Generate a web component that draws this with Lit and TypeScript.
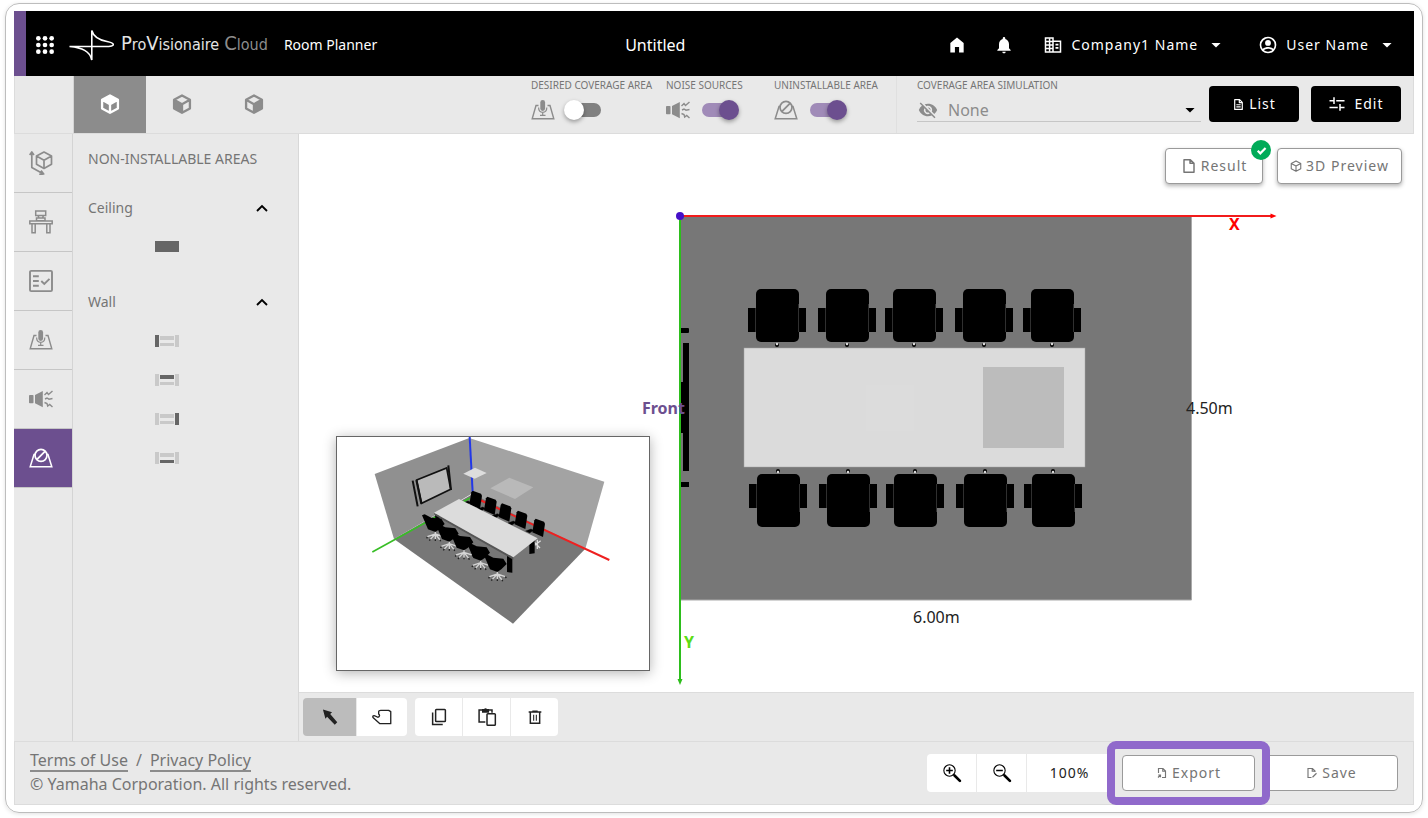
import { LitElement, html, svg, css } from "lit";
import { customElement, state } from "lit/decorators.js";
import { classMap } from "lit/directives/class-map.js";

const icon = (body: unknown, size = 24, box = "0 0 24 24") =>
  html`<svg class="icon" width=${size} height=${size} viewBox=${box} fill="currentColor" aria-hidden="true">${body}</svg>`;

/* Glyphs on a 24 unit grid */
const caret = svg`<path d="M6.500 9.500h11L12 15z"/>`;
const home = svg`<path d="M4 21V9.500L12 3l8 6.500V21h-5.500v-6.500h-5V21z"/>`;
const bell = svg`<path d="M12 22c1.100 0 2-.9 2-2h-4c0 1.100.9 2 2 2zm6-6v-5c0-3.070-1.640-5.640-4.500-6.320V4a1.500 1.500 0 0 0-3 0v.68C7.630 5.360 6 7.920 6 11v5l-2 2v1h16v-1z"/>`;
const company = svg`<path fill="none" stroke="currentColor" stroke-width="1.8" d="M3 3.500h9v17H3zM12 7.500h9v13h-9M3 7.700h9M3 12h9M3 16.200h9"/><path d="M7 4h1.800v16H7zM15 10.500h3.500v2H15zm0 4h3.500v2H15z"/>`;
const account = svg`<path fill-rule="evenodd" d="M12 2a10 10 0 1 0 0 20 10 10 0 0 0 0-20zM7.070 18.280C7.500 17.380 10.120 16.500 12 16.500s4.510.88 4.930 1.780A7.900 7.900 0 0 1 12 20a7.900 7.900 0 0 1-4.930-1.720zm11.290-1.450C16.930 15.090 13.460 14.500 12 14.500s-4.930.59-6.360 2.330A8 8 0 1 1 20 12a7.900 7.900 0 0 1-1.640 4.830zM12 6a3.500 3.500 0 1 0 0 7 3.500 3.500 0 0 0 0-7z"/>`;
const cubeFrame = svg`<path fill="none" stroke="currentColor" stroke-width="2.200" stroke-linejoin="round" d="M12 1.800 21.500 7v10.300L12 22.500 2.500 17.300V7zM2.500 7 12 12.200 21.500 7M12 12.200v10.300"/>`;
const cubeShell = svg`<path fill="none" stroke="currentColor" stroke-width="2.800" stroke-linejoin="round" d="M12 1.800 21.500 7v10.300L12 22.500 2.500 17.300V7zM2.500 7 12 12.200 21.500 7M12 12.200v10.300"/>`;
const cubeTop = svg`${cubeShell}<path d="M12 2 21 7l-9 5.200L3 7z"/>`;
const cubeLeft = svg`${cubeShell}<path d="M2.500 7 12 12.200v10L2.500 17z"/>`;
const cubeRight = svg`${cubeShell}<path d="M21.500 7 12 12.200v10l9.500-5.200z"/>`;
const cubeAxes = svg`<g fill="none" stroke="currentColor" stroke-width="1.700" stroke-linejoin="round"><path d="M15 1 22.500 5v8.300L15 17.500l-7.500-4.200V5zM7.500 5 15 9.200 22.500 5M15 9.200v8.300"/><path d="M2.800 2v14.500l11.200 6.300M.6 4l2.200-3L5 4M12 19.600l2.700 3.400-4.500.4"/></g>`;
const desk = svg`<g fill="none" stroke="currentColor" stroke-width="1.500"><path d="M6.700 1h10v4.500h-10zM9 5.500 10 8M14.500 5.500 13.500 8M7.500 8h8.500v2.700H7.500zM.8 11h22.400v2.800H.8zM3 13.800h3.200v9H3zM17.800 13.800H21v9h-3.200z"/></g>`;
const checklist = svg`<g fill="none" stroke="currentColor" stroke-width="1.900"><rect x="1" y="1.900" width="22" height="20.200" rx="1.200"/><path d="M4 7.300h5.800M4 12h5.800M4 16.700h5.800M12.300 12l3 3 5.200-5.200"/></g>`;
const mic = svg`<path fill="none" stroke="currentColor" stroke-width="1.400" d="M7.500 7.500H5L1.200 20.800h21.600L19 7.500h-2.500"/><rect x="9.300" y="2" width="4.800" height="11" rx="2.400"/><path fill="none" stroke="currentColor" stroke-width="1.200" d="M7.600 9.500c0 3 1.700 4.800 4.100 4.800s4.100-1.800 4.100-4.800M11.700 14.300v3M9 17.300h5.500"/>`;
const noise = svg`<rect x="0" y="8" width="4.500" height="8.300" rx=".8"/><path d="M6 8l7.800-4v16.300l-7.800-4z"/><path fill="none" stroke="currentColor" stroke-width="1.400" d="m15.500 8 2.500-2.500 1.500 2L23.500 4M16 12l2-1 2 1.200 3.500-.7M15.500 15.500l2.500 1 .7 2.500 2-1.500L23.500 20"/>`;
const blocked = svg`<path fill="none" stroke="currentColor" stroke-width="1.500" d="M6.500 8.500H5L1.200 20.800h21.600L19 8.500h-1.500"/><circle cx="12" cy="9.300" r="6" fill="none" stroke="currentColor" stroke-width="1.700"/><path fill="none" stroke="currentColor" stroke-width="1.700" d="m8 13.300 8-8"/>`;
const hidden = svg`<path d="M12 7a5 5 0 0 1 5 5c0 .65-.13 1.260-.36 1.830l2.920 2.920A11.800 11.800 0 0 0 23 12C21.270 7.610 17 4.500 12 4.500c-1.400 0-2.740.25-3.980.7l2.160 2.160C10.740 7.130 11.350 7 12 7zM2 4.270l2.740 2.740A11.800 11.800 0 0 0 1 12c1.730 4.390 6 7.500 11 7.500 1.550 0 3.030-.3 4.380-.84L19.730 22 21 20.730 3.270 3zM7.530 9.800l1.550 1.550A2.800 2.800 0 0 0 12 15c.22 0 .44-.03.65-.08l1.550 1.550A5 5 0 0 1 7.530 9.800zm4.310-.78 3.150 3.150.02-.16a3 3 0 0 0-3-3z"/>`;
const sheet = svg`<path fill="none" stroke="currentColor" stroke-width="2.200" stroke-linejoin="round" d="M14 3H5v18h14V8zM13.500 3v5.500H19M8 12.500h8M8 16.500h8"/>`;
const tune = svg`<path fill="none" stroke="currentColor" stroke-width="2" d="M2 7.500h7M11 7.500h11M8 3v9M2 16.500h11M16 12v9M16 16.500h6"/>`;
const file = svg`<path fill="none" stroke="currentColor" stroke-width="2.200" stroke-linejoin="round" d="M14 2.500H4.500v19h15V8zM13.500 2.500V8h6"/>`;
const fileOut = svg`<path fill="none" stroke="currentColor" stroke-width="2.300" d="M5 12V3h9l5 5v13h-7M13.500 3v5.500H19M4 21l5-5M4.500 16H9v4.500"/>`;
const fileIn = svg`<path fill="none" stroke="currentColor" stroke-width="2.300" d="M11 21H4V3h9l5 5v2M12.500 3v5.500H18M13 20.500l8-8"/>`;
const tick = svg`<path fill="none" stroke="currentColor" stroke-width="4" d="m5 12.500 4.800 4.800L19.500 7.500"/>`;
const chevron = svg`<path fill="none" stroke="currentColor" stroke-width="2.800" d="m4.500 16.500 7.500-7.500 7.500 7.500"/>`;
const pointer = svg`<path d="M3.500 3 14.500 6.200l-2.300 2.200 8.500 10-3 2.800-9.200-9.400-2 2.300z"/>`;
const hand = svg`<path fill="none" stroke="currentColor" stroke-width="1.600" stroke-linejoin="round" d="M8 8.500V5.500C8 4.500 9 4 10.500 4H20l2.500 1.500V20H9.500L1.200 12.500c-.8-1.800 1-2.500 2.300-1.800L7 12.300C9.500 12 9.500 9.300 8 8.500z"/>`;
const copy = svg`<g fill="none" stroke="currentColor" stroke-width="2"><rect x="7.500" y="2" width="13" height="16" rx="1"/><path d="M3.500 6v16H17"/></g>`;
const paste = svg`<g fill="none" stroke="currentColor" stroke-width="1.800"><path d="M10 18H2.500V3.500H18V7"/><rect x="12" y="8" width="10" height="14" rx="1"/></g><path d="M6 2.500h2.500a2 2 0 0 1 3.500 0h2.500V7H6z"/>`;
const trash = svg`<g fill="none" stroke="currentColor" stroke-width="2.200"><path d="M2.500 4.500h19M8 3.500h8M5 5v16.500h14V5"/><path stroke-width="1.600" d="M10 8.500v9M14 8.500v9"/></g>`;
const zoomIn = svg`<circle cx="9" cy="9" r="6.800" fill="none" stroke="currentColor" stroke-width="1.300"/><path fill="none" stroke="currentColor" stroke-width="1.900" d="M9 5v8M5 9h8"/><path fill="none" stroke="currentColor" stroke-width="3.200" stroke-linecap="round" d="m15 15 6.500 6.500"/>`;
const zoomOut = svg`<circle cx="9" cy="9" r="6.800" fill="none" stroke="currentColor" stroke-width="1.300"/><path fill="none" stroke="currentColor" stroke-width="1.900" d="M5 9h8"/><path fill="none" stroke="currentColor" stroke-width="3.200" stroke-linecap="round" d="m15 15 6.500 6.500"/>`;

@customElement("app-header")
class AppHeader extends LitElement {
  static styles = css`
    :host { display: block; font-family: "Noto Sans", sans-serif; }
    .bar { display: flex; align-items: center; box-sizing: border-box; height: 65px; padding: 2px 1px 0 0; background: #000; color: #fff; border-left: 12px solid #6c4f8f; }
    button { display: flex; align-items: center; gap: 8px; border: 0; padding: 0; background: none; color: inherit; font: inherit; font-size: 14px; line-height: 20px; cursor: pointer; }
    .apps { margin-left: 9px; }
    .brand { display: flex; align-items: center; gap: 7px; margin-left: 14px; color: #fff; text-decoration: none; }
    .word { display: flex; align-items: baseline; font-family: "Liberation Sans Narrow", "DejaVu Sans Condensed", sans-serif; font-size: 16px; line-height: 30px; color: #e4e4e4; }
    .big { font-size: 20px; line-height: 24px; }
    .cloud { margin-left: 5px; color: #8d8d8d; }
    .product { margin-left: 16px; font-size: 14px; line-height: 20px; white-space: nowrap; }
    h1 { flex: 1; margin: 0; text-align: center; font-weight: 400; font-size: 16px; line-height: 24px; }
    .round { width: 47px; height: 48px; justify-content: center; }
    .menu { height: 48px; padding: 0 16px; letter-spacing: 1px; white-space: nowrap; }
    .icon { display: block; flex: none; }
  `;

  render() {
    return html`<header class="bar">
      <button class="apps" aria-label="Apps">
        ${icon([4, 12, 20].map((y) => [4, 12, 20].map((x) => svg`<circle cx=${x} cy=${y} r="2.800"/>`)), 20)}
      </button>
      <a class="brand" href="#">
        <svg width="45" height="32" viewBox="0 0 45 32" fill="none" stroke="#fff" stroke-width="1.600" aria-hidden="true">
          <path d="M.5 17.500H36c6 0 8.500-.8 8.300-2-.3-1.500-2.600-2.300-6.300-3C30 11 24.500 8 22.800 1.500V31C21 22 13 18.800.5 17.500z"/>
        </svg>
        <span class="word"><span class="big">P</span>ro<span class="big">V</span>isionaire<span class="cloud"><span class="big">C</span>loud</span></span>
      </a>
      <span class="product">Room Planner</span>
      <h1>Untitled</h1>
      <button class="round" aria-label="Home">${icon(home, 20)}</button>
      <button class="round" aria-label="Notifications">${icon(bell, 20)}</button>
      <button class="menu">${icon(company, 20)}<span>Company1 Name</span>${icon(caret, 20)}</button>
      <button class="menu">${icon(account, 20)}<span>User Name</span>${icon(caret, 20)}</button>
    </header>`;
  }
}

@customElement("room-plan")
class RoomPlan extends LitElement {
  static styles = css`
    :host { display: block; }
    svg { display: block; font-family: "Noto Sans", sans-serif; font-size: 16px; }
    .strong { font-weight: 700; }
  `;

  private chair(x: number, y: number, flip: boolean) {
    return svg`<g transform=${`translate(${x} ${y}) scale(1 ${flip ? -1 : 1})`}>
      <rect x="-21" y="-27" width="43" height="53" rx="5"/>
      <rect x="-29" y="-8" width="8" height="24"/><rect x="22" y="-8" width="7" height="24"/>
      <path d="M-21.500-12v28M21.500-12v28" stroke="#777" stroke-width=".4"/>
      <circle cx="0" cy="29" r="2"/><circle cx="0" cy="28" r="1.200" fill="#ddd"/>
    </g>`;
  }

  render() {
    const seats = [777, 847, 914, 984, 1052];
    return html`<svg width="640" height="490" viewBox="640 200 640 490" role="img" aria-label="Room plan, top view">
      <rect x="680" y="216" width="512" height="384" fill="#777"/>
      <path d="M1191.500 216v384H680" fill="none" stroke="#aaa"/>
      ${seats.map((x) => this.chair(x, 316, false))}
      ${seats.map((x) => this.chair(x + 1, 500, true))}
      <rect x="744" y="348" width="341" height="119" fill="#dbdbdb" stroke="#a5a5a5" stroke-width=".5"/>
      <rect x="866" y="385" width="48" height="46" fill="#dcdcdc"/>
      <rect x="983" y="367" width="81" height="81" fill="#bcbcbc"/>
      <path d="M683 343h6v128h-6zM680 382h6v51h-6zM680 328h8a1 1 0 0 1 1 1v3a1 1 0 0 1-1 1h-8zM680 482h9v5h-9z"/>
      <path d="M680 216h592" stroke="#f21b1b" stroke-width="2"/><path d="M1276.500 216l-6-2.500v5z" fill="red"/>
      <path d="M680 216v464" stroke="#2dbe1c" stroke-width="2"/><path d="M680 685l-2.500-6h5z" fill="#2dbe1c"/>
      <circle cx="680" cy="216" r="4" fill="#4510c8"/>
      <text class="strong" x="1229" y="230" fill="red">X</text>
      <text class="strong" x="684" y="648" fill="#5bdc14">Y</text>
      <text class="strong" x="642" y="414" fill="#6c4f8f">Front</text>
      <text x="1186" y="414" fill="#222">4.50m</text>
      <text x="913" y="623" fill="#222">6.00m</text>
    </svg>`;
  }
}

@customElement("room-preview")
class RoomPreview extends LitElement {
  static styles = css`
    :host { display: block; border: 1px solid #666; background: #fff; box-shadow: 0 2px 12px rgba(0, 0, 0, 0.3); }
    svg { display: block; }
  `;

  private backSeat(x: number, y: number) {
    return svg`<g transform=${`translate(${x} ${y})`}><path d="M-12-20-8-25 17-16 20-10 14 30-18 16z"/><path d="M-38 12l16-6 8 4-12 8z" stroke="#000"/></g>`;
  }

  private frontSeat(x: number, y: number) {
    return svg`<g transform=${`translate(${x} ${y})`}>
      <path d="M0 20v26M-24 38 0 30l24 8M-15 46 0 30l14 18" fill="none" stroke="#d5d5d5" stroke-width="4"/>
      <path d="M-24 39l-2 4M24 38l3 4M0 46v5M14 47l2 5M-15 46l-3 4" stroke="#222" stroke-width="4"/>
      <path d="M-40-26l8-3 20 10 30 3 10 16-16 16-12 8-22-8z"/>
    </g>`;
  }

  render() {
    return html`<svg width="312" height="233" viewBox="51 37 936 699" role="img" aria-label="Room preview in 3D">
      <path d="M164 148 448 40l10 166L222 343z" fill="#909090"/>
      <path d="M448 40 853 171l-57 201L458 212z" fill="#a3a3a3"/>
      <path d="M222 343 458 208l338 164-217 225z" fill="#777"/>
      <path d="M449 37l9 166" stroke="#2238e8" stroke-width="6"/>
      <path d="M480 226 868 406" stroke="#ee2020" stroke-width="6"/>
      <path d="M157 382 450 220" stroke="#38be26" stroke-width="5"/>
      <path d="M430 147l35-18 35 16-36 17z" fill="#ddd"/>
      <path d="M511 191l57-32 72 29-55 35z" fill="#b9b9b9"/>
      <path d="M290 166 380 130l12 64-87 42z" fill="#bababa" stroke="#111" stroke-width="5"/>
      <path d="M278 168l15 77M385 122l8 74M289 166l15 72" stroke="#111" stroke-width="6"/>
      <path d="M640 350l20 20M644 362l18-14M652 345v28" stroke="#ddd" stroke-width="4"/>
      ${[[466, 223], [510, 241], [554, 261], [602, 283], [655, 307]].map(([x, y]) => this.backSeat(x, y))}
      <path d="M345 268l14 2v28h-12zM628 350l16-6v42l-16 2zM561 394l16-6v56l-16-2z"/>
      <path d="M342 264 580 397v8L344 272z" fill="#555"/>
      ${[[346, 298], [388, 327], [432, 353], [482, 384], [532, 418]].map(([x, y]) => this.frontSeat(x, y))}
      <path d="M342 264l75-41 236 118-73 57z" fill="#dcdcdc"/>
    </svg>`;
  }
}

@customElement("app-root")
class AppRoot extends LitElement {
  static styles = css`
    :host { display: flex; min-height: 100vh; background: #fff; font-family: "Noto Sans", sans-serif; font-size: 14px; line-height: 20px; color: #757575; }
    * { box-sizing: border-box; }
    button, select, input { font: inherit; color: inherit; margin: 0; }
    button { display: inline-flex; align-items: center; justify-content: center; padding: 0; border: 0; background: none; cursor: pointer; }
    .icon { display: block; flex: none; }
    .frame { flex: 1; display: flex; flex-direction: column; min-width: 0; margin: 3px 5px 5px; padding: 7px 8px; border: 1px solid #bdbdbd; border-radius: 14px; box-shadow: 0 1px 4px rgba(0, 0, 0, 0.12); }

    .tools { display: flex; height: 58px; background: #e9e9e9; border: solid #dcdcdc; border-width: 0 1px 1px; }
    .corner { width: 59px; border-right: 1px solid #d4d4d4; }
    .view { width: 72px; padding-bottom: 1px; color: #8c8c8c; }
    .view.on { background: #8c8c8c; color: #fff; }
    .toggles { display: flex; margin-left: auto; border-right: 1px solid #e0e0e0; }
    .toggle { width: 108px; }
    .toggle.wide { width: 135px; }
    .toggle.last { width: 122px; }
    .caption { display: block; font-size: 10px; line-height: 18px; white-space: nowrap; }
    .row { display: flex; align-items: center; gap: 12px; height: 32px; color: #8c8c8c; }
    .switch { appearance: none; position: relative; width: 34px; height: 14px; border-radius: 7px; background: #808080; cursor: pointer; }
    .switch::before { content: ""; position: absolute; top: -3px; left: -3px; width: 20px; height: 20px; border-radius: 50%; background: #fff; box-shadow: 0 2px 4px rgba(0, 0, 0, 0.35); }
    .switch:checked { background: #a08bb8; }
    .switch:checked::before { left: 17px; background: #6c4f8f; }
    .simulation { width: 284px; margin: 0 8px 0 20px; }
    .picker { position: relative; display: flex; align-items: center; height: 28px; padding-top: 4px; border-bottom: 1px solid #c6c6c6; color: #8c8c8c; }
    .picker select { appearance: none; width: 100%; height: 24px; padding: 0 32px 0 31px; border: 0; background: none; font-size: 16px; line-height: 24px; }
    .picker .lead, .picker .tail { position: absolute; pointer-events: none; }
    .picker .lead { left: 1px; }
    .picker .tail { right: 1px; color: #000; }
    .actions { display: flex; gap: 12px; padding: 10px 12px 0 0; }
    .solid { width: 90px; height: 36px; gap: 4px; border-radius: 4px; background: #000; color: #fff; letter-spacing: 1px; }
    .solid.spaced { gap: 8px; }

    .body { flex: 1; display: flex; min-height: 0; }
    .rail { width: 59px; background: #e9e9e9; border-right: 1px solid #d4d4d4; }
    .rail button { width: 100%; height: 59px; padding-right: 4px; border-bottom: 1px solid #c6c6c6; color: #8c8c8c; }
    .rail button.on { background: #6c4f8f; color: #fff; }
    .panel { width: 226px; padding: 15px 15px 0; background: #e9e9e9; border-right: 1px solid #d8d8d8; }
    h2, h3 { margin: 0; font-weight: 400; font-size: 14px; line-height: 20px; white-space: nowrap; }
    h2 { margin-bottom: 27px; }
    .fold { display: flex; align-items: center; justify-content: space-between; width: 100%; height: 24px; padding-right: 13px; }
    .fold .icon { color: #000; }
    .areas { list-style: none; margin: 7px 0 24px; padding: 0 0 0 67px; }
    .areas li, .areas button { display: flex; height: 39px; }

    .stage { flex: 1; display: flex; flex-direction: column; min-width: 0; }
    .canvas { flex: 1; position: relative; overflow: hidden; min-height: 558px; background: #fff; }
    .plan { position: absolute; left: 341px; top: 66px; }
    .preview { position: absolute; left: 37px; top: 302px; }
    .floating { position: absolute; top: 14px; right: 12px; display: flex; gap: 14px; }
    .lined { position: relative; height: 36px; gap: 4px; border: 1px solid #9a9a9a; border-radius: 4px; background: #fff; letter-spacing: 1px; }
    .floating .lined { box-shadow: 0 2px 4px rgba(0, 0, 0, 0.3); }
    .result { width: 98px; }
    .threed { width: 125px; }
    .done { position: absolute; top: -9px; right: -9px; display: flex; align-items: center; justify-content: center; width: 20px; height: 20px; border-radius: 50%; background: #00ab59; color: #fff; }

    .edit { display: flex; gap: 8px; height: 49px; padding: 5px 4px; background: #e9e9e9; border-top: 1px solid #dcdcdc; }
    .group { display: flex; gap: 1px; height: 38px; border-radius: 4px; overflow: hidden; color: #222; }
    .group button { width: 47px; background: #fff; }
    .group .large { width: 50px; }
    .group .on { width: 53px; background: #bcbcbc; }

    footer { display: flex; align-items: center; justify-content: space-between; height: 64px; padding: 0 15px; background: #e9e9e9; border: 1px solid #dcdcdc; }
    .legal { padding-bottom: 2px; font-size: 16px; line-height: 24px; }
    .legal p { margin: 0; }
    .legal a { display: inline-block; line-height: 20px; color: inherit; text-decoration: none; border-bottom: 2px solid #8c8c8c; }
    .legal .slash { margin: 0 8px; }
    .controls { display: flex; align-items: center; gap: 10px; }
    .zoom { display: flex; gap: 1px; height: 38px; border-radius: 4px; overflow: hidden; color: #222; }
    .zoom button { width: 49px; background: #fff; color: #000; }
    .zoom output { width: 85px; background: #fff; text-align: center; line-height: 38px; letter-spacing: 1px; }
    .wide-button { width: 133px; }
    .marked::after { content: ""; position: absolute; z-index: 1; inset: -15px -16px; border: 8px solid #9069cb; border-radius: 9px; pointer-events: none; }
  `;

  @state() private view = 0;
  @state() private section = 5;

  private wall(active: number) {
    const parts = [[0, 0, 4, 12], [5, 1, 14, 4], [20, 0, 4, 12], [5, 8, 14, 3]];
    return html`<svg width="24" height="12" viewBox="0 0 24 12" aria-hidden="true">
      ${parts.map(([x, y, w, h], i) => svg`<rect x=${x} y=${y} width=${w} height=${h} fill=${i === active ? "#666" : "#c9c9c9"}/>`)}
    </svg>`;
  }

  render() {
    const views: [string, unknown][] = [["Ceiling view", cubeTop], ["Left view", cubeLeft], ["Right view", cubeRight]];
    const sections: [string, unknown][] = [
      ["Room size", cubeAxes], ["Furniture", desk], ["Checklist", checklist],
      ["Coverage", mic], ["Noise", noise], ["Non-installable areas", blocked],
    ];
    return html`<div class="frame">
      <app-header></app-header>
      <div class="tools">
        <div class="corner"></div>
        ${views.map(([label, glyph], i) => html`<button class=${classMap({ view: true, on: i === this.view })} aria-label=${label} @click=${() => (this.view = i)}>${icon(glyph, 20)}</button>`)}
        <div class="toggles">
          <label class="toggle wide"><span class="caption">DESIRED COVERAGE AREA</span>
            <span class="row">${icon(mic)}<input class="switch" type="checkbox"></span></label>
          <label class="toggle"><span class="caption">NOISE SOURCES</span>
            <span class="row">${icon(noise)}<input class="switch" type="checkbox" checked></span></label>
          <label class="toggle last"><span class="caption">UNINSTALLABLE AREA</span>
            <span class="row">${icon(blocked)}<input class="switch" type="checkbox" checked></span></label>
        </div>
        <div class="simulation">
          <label class="caption" for="simulation">COVERAGE AREA SIMULATION</label>
          <div class="picker">
            <svg class="lead" width="20" height="20" viewBox="0 0 24 24" fill="currentColor" aria-hidden="true">${hidden}</svg>
            <select id="simulation"><option>None</option></select>
            <svg class="tail" width="20" height="20" viewBox="0 0 24 24" fill="currentColor" aria-hidden="true">${caret}</svg>
          </div>
        </div>
        <div class="actions">
          <button class="solid">${icon(sheet, 13)}List</button>
          <button class="solid spaced">${icon(tune, 18)}Edit</button>
        </div>
      </div>
      <div class="body">
        <nav class="rail">
          ${sections.map(([label, glyph], i) => html`<button class=${classMap({ on: i === this.section })} aria-label=${label} @click=${() => (this.section = i)}>${icon(glyph)}</button>`)}
        </nav>
        <aside class="panel">
          <h2>NON-INSTALLABLE AREAS</h2>
          <h3><button class="fold" aria-expanded="true">Ceiling${icon(chevron, 16)}</button></h3>
          <ul class="areas"><li><button aria-label="Ceiling">
            <svg width="24" height="12" viewBox="0 0 24 12" aria-hidden="true"><rect width="24" height="11" fill="#666"/></svg>
          </button></li></ul>
          <h3><button class="fold" aria-expanded="true">Wall${icon(chevron, 16)}</button></h3>
          <ul class="areas">${["Left", "Back", "Right", "Front"].map((label, i) => html`<li><button aria-label=${label}>${this.wall(i)}</button></li>`)}</ul>
        </aside>
        <main class="stage">
          <div class="canvas">
            <room-plan class="plan"></room-plan>
            <room-preview class="preview"></room-preview>
            <div class="floating">
              <button class="lined result">${icon(file, 16)}Result<span class="done">${icon(tick, 13)}</span></button>
              <button class="lined threed">${icon(cubeFrame, 12)}3D Preview</button>
            </div>
          </div>
          <div class="edit">
            <div class="group">
              <button class="on" aria-label="Select">${icon(pointer, 20)}</button>
              <button class="large" aria-label="Pan">${icon(hand, 20)}</button>
            </div>
            <div class="group">
              <button aria-label="Copy">${icon(copy, 18)}</button>
              <button aria-label="Paste">${icon(paste, 20)}</button>
              <button aria-label="Delete">${icon(trash, 16)}</button>
            </div>
          </div>
        </main>
      </div>
      <footer>
        <div class="legal">
          <p><a href="#">Terms of Use</a><span class="slash">/</span><a href="#">Privacy Policy</a></p>
          <p>© Yamaha Corporation. All rights reserved.</p>
        </div>
        <div class="controls">
          <div class="zoom">
            <button aria-label="Zoom in">${icon(zoomIn, 20)}</button>
            <button aria-label="Zoom out">${icon(zoomOut, 20)}</button>
            <output>100%</output>
          </div>
          <button class="lined wide-button marked">${icon(fileOut, 12)}Export</button>
          <button class="lined wide-button">${icon(fileIn, 12)}Save</button>
        </div>
      </footer>
    </div>`;
  }
}
